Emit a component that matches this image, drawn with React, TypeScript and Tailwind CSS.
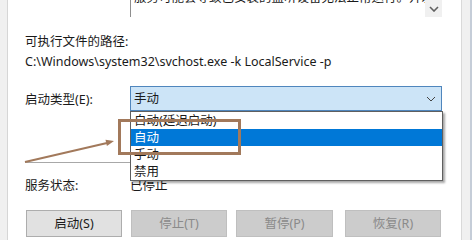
import React from 'react';

const font = { fontFamily: '"Noto Sans", "Noto Sans CJK SC", sans-serif' };

const options = ['自动(延迟启动)', '自动', '手动', '禁用'];

const buttons = [
  { label: '启动(S)', enabled: true, cls: 'ml-[1px] w-[96px]' },
  { label: '停止(T)', enabled: false, cls: 'ml-[9px] w-[96px]' },
  { label: '暂停(P)', enabled: false, cls: 'ml-[9px] w-[97px]' },
  { label: '恢复(R)', enabled: false, cls: 'ml-[12px] w-[96px]' },
];

const Chevron: React.FC<{ className?: string; width?: number }> = ({ className, width = 1 }) => (
  <svg width="10" height="6" viewBox="0 0 10 6" className={className}>
    <path d="M1 1 L5 5 L9 1" fill="none" stroke="currentColor" strokeWidth={width} />
  </svg>
);

const App: React.FC = () => {
  return (
    <div className="relative w-[475px] h-[240px] overflow-hidden flex bg-[#f0f0f0] text-[12.5px] leading-[16px] text-[#1a1a1a]" style={font}>
      {/* left window edge */}
      <div className="w-[8px] shrink-0 border-r border-[#d6d6d6]" />

      {/* tab page */}
      <div className="w-[454px] shrink-0 bg-white border-r border-[#d9d9d9] pl-[17px] flex flex-col">
        {/* description box, scrolled */}
        <div className="flex h-[17px]">
          <div className="w-[105px] shrink-0" />
          <div className="w-[312px] flex border-l border-[#8e8e8e] overflow-hidden">
            <div className="flex-1 pl-[3px] overflow-hidden whitespace-nowrap">
              <div className="-mt-[10px]">服务可能会导致已安装的监听设备无法正常运行。开发</div>
            </div>
            <div className="w-[17px] bg-[#f0f0f0] flex items-center justify-center text-[#606060]">
              <Chevron width={1.6} />
            </div>
          </div>
        </div>

        <div className="mt-[17px]">可执行文件的路径:</div>
        <div className="mt-[4px] whitespace-nowrap">C:\Windows\system32\svchost.exe -k LocalService -p</div>

        {/* startup type */}
        <div className="mt-[16px] flex items-center h-[25px]">
          <div className="w-[105px] shrink-0 pt-[3px]">启动类型(E):</div>
          <div className="relative w-[312px] h-[25px]">
            <div className="h-full flex items-center justify-between border border-[#4f86bd] bg-[#cce4f7] pl-[3px] pr-[5px]">
              <span>手动</span>
              <Chevron className="text-[#444]" />
            </div>
            <div className="absolute left-0 top-full w-[313px] border border-[#5f5f5f] bg-white shadow-[2px_2px_2px_rgba(0,0,0,0.35)] z-10">
              {options.map((o, i) => (
                <div
                  key={o}
                  className={`h-[17px] pl-[3px] flex items-center ${i === 1 ? 'bg-[#0078d7] text-white' : ''}`}
                >
                  {o}
                </div>
              ))}
            </div>
          </div>
        </div>

        <div className="mt-[51px] w-[417px] h-px bg-[#a8a8a8]" />

        <div className="mt-[15px] flex">
          <div className="w-[105px] shrink-0">服务状态:</div>
          <div>已停止</div>
        </div>

        <div className="mt-[16px] flex">
          {buttons.map(b => (
            <div
              key={b.label}
              className={`${b.cls} h-[27px] shrink-0 flex items-center justify-center border ${
                b.enabled ? 'bg-[#e1e1e1] border-[#adadad] text-[#1a1a1a]' : 'bg-[#cccccc] border-[#bfbfbf] text-[#8a8a8a]'
              }`}
            >
              {b.label}
            </div>
          ))}
        </div>
      </div>

      {/* right window edge */}
      <div className="w-[8px] shrink-0" />
      <div className="w-[2px] shrink-0 bg-[#c5cdd8]" />
      <div className="flex-1 bg-white" />

      {/* annotation overlay */}
      <svg className="absolute inset-0 pointer-events-none z-20" width="475" height="240" viewBox="0 0 475 240">
        <rect x="119.5" y="120.5" width="120" height="33" fill="none" stroke="#a2795b" strokeWidth="3" />
        <line x1="25" y1="162" x2="107" y2="143" stroke="#a2795b" strokeWidth="2" />
        <polygon points="114,141 106.9,146 105.5,139.8" fill="#a2795b" />
      </svg>
    </div>
  );
};

export default App;
